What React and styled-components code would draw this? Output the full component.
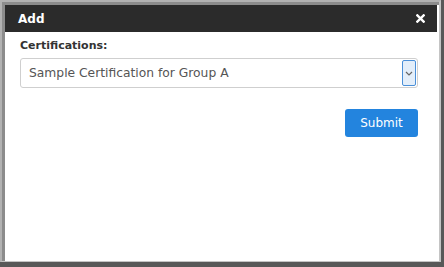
import styled, { createGlobalStyle } from "styled-components";

const GlobalStyle = createGlobalStyle`
  html, body {
    margin: 0;
    padding: 0;
    background: #585858;
    overflow: hidden;
  }
  * {
    box-sizing: border-box;
  }
`;

const Frame = styled.div`
  width: 441px;
  height: 262px;
  border: 2px solid #b2b2b2;
  border-right-width: 2px;
  border-bottom-width: 1px;
  border-right-color: #c4c4c4;
  border-bottom-color: #c4c4c4;
`;

const Dialog = styled.div`
  height: 100%;
  display: flex;
  flex-direction: column;
  background: #fff;
  border-top: 3px solid #8c8c8c;
  border-left: 3px solid #8c8c8c;
  font-family: "DejaVu Sans", Verdana, sans-serif;
`;

const TitleBar = styled.div`
  height: 27px;
  display: flex;
  align-items: center;
  justify-content: space-between;
  padding: 0 10px 0 13px;
  background: #2b2b2b;
  color: #fff;
  margin-right: 2px;
`;

const Title = styled.span`
  font-size: 12px;
  font-weight: bold;
`;

const CloseButton = styled.button`
  display: flex;
  align-items: center;
  justify-content: center;
  width: 14px;
  height: 14px;
  padding: 0;
  border: none;
  background: none;
  cursor: pointer;
`;

const Body = styled.div`
  display: flex;
  flex-direction: column;
  padding: 7px 0 0 15px;
`;

const Label = styled.label`
  font-size: 11px;
  font-weight: bold;
  color: #333;
  line-height: 14px;
`;

const Select = styled.div`
  margin-top: 5px;
  width: 398px;
  height: 30px;
  display: flex;
  align-items: center;
  justify-content: space-between;
  padding: 0 1px 0 8px;
  border: 1px solid #cfcfcf;
  border-radius: 3px;
  font-size: 12.3px;
  color: #555;
`;

const Arrow = styled.span`
  width: 14px;
  height: 26px;
  display: flex;
  align-items: center;
  justify-content: center;
  background: #e3eefa;
  border: 1px solid #4a8fd8;
  border-radius: 2px;
`;

const Actions = styled.div`
  width: 398px;
  display: flex;
  justify-content: flex-end;
  margin-top: 21px;
`;

const SubmitButton = styled.button`
  width: 73px;
  height: 28px;
  border: none;
  border-radius: 3px;
  background: #2384de;
  color: #fff;
  font-family: "DejaVu Sans", Verdana, sans-serif;
  font-size: 12px;
  cursor: pointer;
`;

export default function App() {
  return (
    <>
      <GlobalStyle />
      <Frame>
        <Dialog>
          <TitleBar>
            <Title>Add</Title>
            <CloseButton aria-label="Close">
              <svg width="9" height="9" viewBox="0 0 10 10">
                <path
                  d="M1.5 1.5 L8.5 8.5 M8.5 1.5 L1.5 8.5"
                  stroke="#fff"
                  strokeWidth="2.6"
                  strokeLinecap="square"
                />
              </svg>
            </CloseButton>
          </TitleBar>
          <Body>
            <Label>Certifications:</Label>
            <Select>
              <span>Sample Certification for Group A</span>
              <Arrow>
                <svg width="8" height="5" viewBox="0 0 8 5">
                  <path d="M1 1 L4 4 L7 1" fill="none" stroke="#666" strokeWidth="1.2" />
                </svg>
              </Arrow>
            </Select>
            <Actions>
              <SubmitButton>Submit</SubmitButton>
            </Actions>
          </Body>
        </Dialog>
      </Frame>
    </>
  );
}
